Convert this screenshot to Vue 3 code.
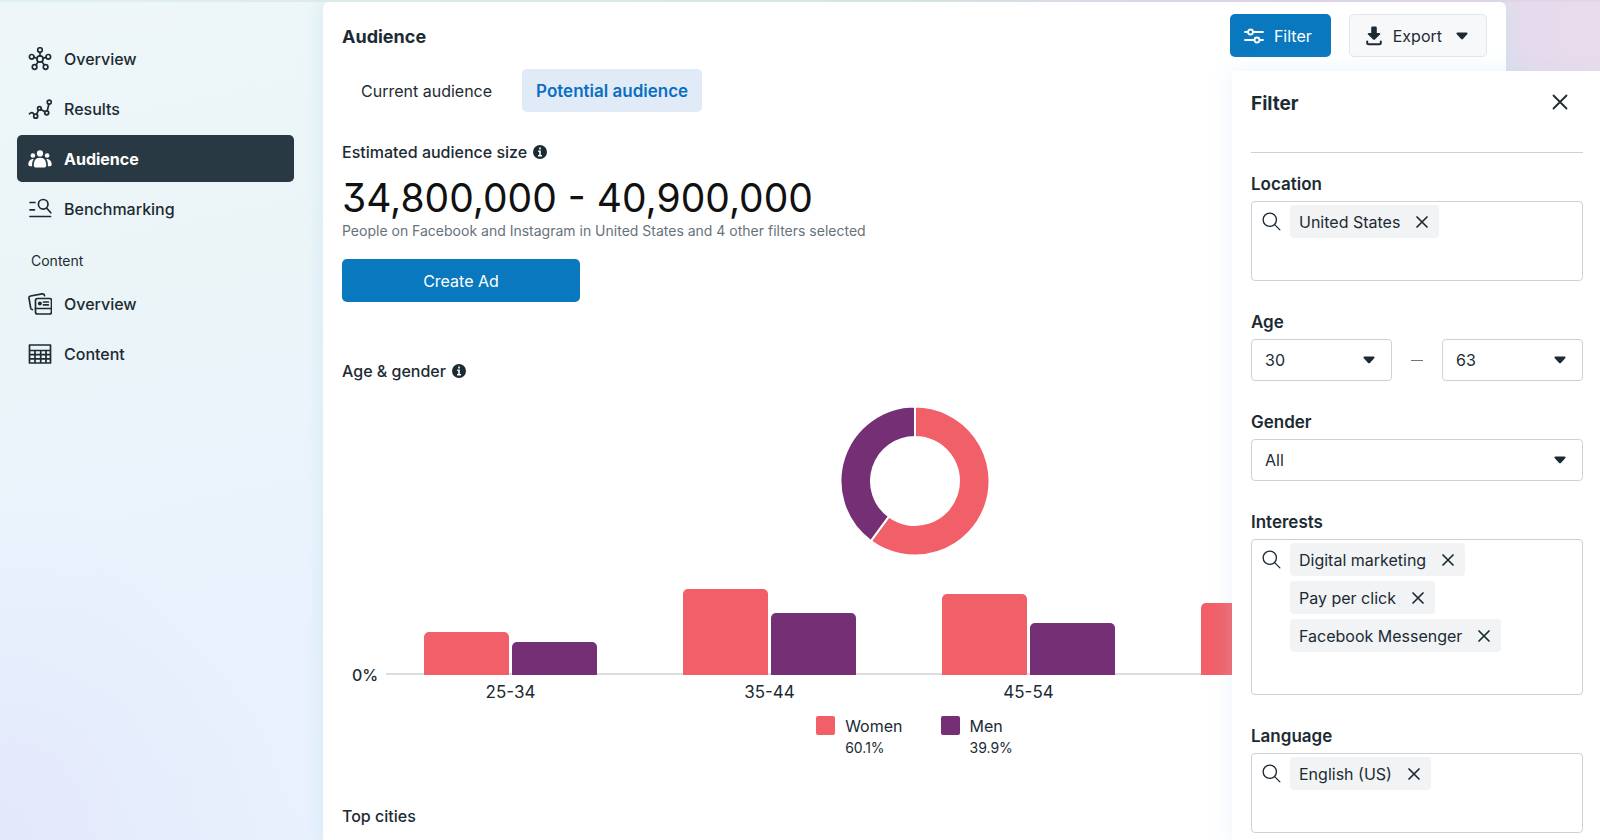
<script setup>
import { ref } from 'vue'

const mainNav = [
  { label: 'Overview', icon: 'hub' },
  { label: 'Results', icon: 'trend' },
  { label: 'Audience', icon: 'people', active: true },
  { label: 'Benchmarking', icon: 'bench' },
]
const contentNav = [
  { label: 'Overview', icon: 'cards' },
  { label: 'Content', icon: 'table' },
]

const groups = [
  { age: '25-34', women: 43, men: 33 },
  { age: '35-44', women: 86, men: 62 },
  { age: '45-54', women: 81, men: 52 },
  { age: '55-64', women: 72, men: 45 },
]

const legend = [
  { name: 'Women', share: '60.1%', key: 'women' },
  { name: 'Men', share: '39.9%', key: 'men' },
]

const locations = ref(['United States'])
const interests = ref(['Digital marketing', 'Pay per click', 'Facebook Messenger'])
const languages = ref(['English (US)'])
const minAge = ref('30')
const maxAge = ref('63')
const gender = ref('All')

function remove(list, item) {
  list.splice(list.indexOf(item), 1)
}

const tagFields = {
  location: { id: 'location', label: 'Location', tags: locations.value },
  interests: { id: 'interests', label: 'Interests', tags: interests.value },
  language: { id: 'language', label: 'Language', tags: languages.value },
}
const fieldOrder = ['location', 'age', 'gender', 'interests', 'language']

const caretPath = 'M1.5.5h9c1 0 1.4 1 .7 1.7L6.9 6.900c-.5.6-1.3.6-1.8 0L.8 2.200C.1 1.500.5.5 1.500.5z'

// Donut slices: shares are measured clockwise from the top
function slice(from, to, outer = 74.5, inner = 44) {
  const point = (share, r) => {
    const a = share * Math.PI * 2
    return `${75 + r * Math.sin(a)} ${75 - r * Math.cos(a)}`
  }
  const large = to - from > 0.5 ? 1 : 0
  return `M${point(from, outer)}A${outer} ${outer} 0 ${large} 1 ${point(to, outer)}L${point(to, inner)}A${inner} ${inner} 0 ${large} 0 ${point(from, inner)}Z`
}
</script>

<template>
  <div class="app">
    <aside class="sidebar">
      <nav aria-label="Insights">
        <template v-for="(list, n) in [mainNav, contentNav]" :key="n">
          <h2 v-if="n === 1" class="nav-heading">Content</h2>
          <ul class="nav-list">
            <li v-for="item in list" :key="item.label">
              <a href="#" class="nav-item" :class="{ active: item.active }">
                <svg class="nav-icon" viewBox="0 0 24 24" aria-hidden="true">
                  <g v-if="item.icon === 'hub'">
                    <circle cx="12" cy="12" r="3.1" />
                    <circle cx="12" cy="3" r="2.3" />
                    <circle cx="3.7" cy="9.8" r="2.3" />
                    <circle cx="20.3" cy="9.8" r="2.3" />
                    <circle cx="6.6" cy="20" r="2.3" />
                    <circle cx="17.6" cy="20" r="2.3" />
                    <path d="M12 5.4v3.5M6.1 10.4l2.9.8M17.9 10.4l-2.9.8M8 18l2.2-3.4M16.2 18 14 14.6" />
                  </g>
                  <g v-else-if="item.icon === 'trend'">
                    <circle cx="7.7" cy="19.2" r="2" />
                    <circle cx="11.4" cy="11.4" r="1.8" />
                    <circle cx="18.7" cy="15.8" r="2" />
                    <circle cx="21.3" cy="5.2" r="2" />
                    <path d="M1.5 16.8c1.6-1.8 3.6-1.6 4.6.6M8.5 17.3l2.1-4.2M13 12.4l4 2.4M19.2 13.8l1.7-6.6" />
                  </g>
                  <g v-else-if="item.icon === 'people'" class="solid">
                    <circle cx="12" cy="6.4" r="3.1" />
                    <circle cx="4.9" cy="8.5" r="2.3" />
                    <circle cx="19.1" cy="8.5" r="2.3" />
                    <path d="M5.800 18.400c0-5 1.900-7.700 6.200-7.700s6.200 2.700 6.200 7.700c0 1.400-1 2-2.200 2H8c-1.200 0-2.200-.6-2.200-2z" />
                    <path d="M5.600 12c-2.800-.4-5.300 2-5.300 5.600 0 1.200.8 1.700 1.800 1.700h2c-.2-3 .4-5.500 1.500-7.300zM18.400 12c2.800-.4 5.300 2 5.300 5.600 0 1.200-.8 1.700-1.800 1.700h-2c.2-3-.4-5.500-1.500-7.300z" />
                  </g>
                  <g v-else-if="item.icon === 'bench'">
                    <circle cx="15.2" cy="7.3" r="4.8" />
                    <path d="M18.600 11l4.200 4.800M2 5.500h5M2 12.800h4.500M2 19.500h20.500" />
                  </g>
                  <g v-else-if="item.icon === 'cards'">
                    <rect x="7.500" y="6.500" width="16" height="15.500" rx="2" />
                    <path d="M7.500 16.500h16M4.400 17.600c-1 0-1.500-.4-1.700-1.400L1 6.200c-.2-1.200.3-2 1.500-2.200l11.600-2.100c1.300-.2 2.200.4 2.400 1.700" />
                    <path d="M15.500 10h4.800M15.500 12.900h4.800" />
                    <circle class="dot" cx="11.900" cy="11.500" r="2" />
                  </g>
                  <g v-else>
                    <path d="M1.500 3h21v18h-21zM1.500 8.500h21M1.500 12.700h21M1.500 16.900h21M7 8.500V21M12.700 8.500V21M18 8.500V21" />
                  </g>
                </svg>
                {{ item.label }}
              </a>
            </li>
          </ul>
        </template>
      </nav>
    </aside>

    <main class="card">
      <header class="toolbar">
        <h1 class="title">Audience</h1>
        <button type="button" class="btn primary">
          <svg class="filter-icon" viewBox="0 0 20 16" aria-hidden="true">
            <circle cx="6.500" cy="4" r="2.500" />
            <circle cx="13" cy="12" r="2.500" />
            <path d="M1 4h3M9 4h10M1 12h9.500M15.500 12H19" />
          </svg>
          Filter
        </button>
        <button type="button" class="btn secondary">
          <svg class="export-icon" viewBox="0 0 16 20" aria-hidden="true">
            <path class="arrow" d="M5.200 1.800Q5.200.5 6.500.5h3q1.300 0 1.300 1.300V7h2.600c.9 0 1.200.8.6 1.400l-5.100 5c-.5.6-1.300.6-1.800 0L2 8.400C1.400 7.800 1.700 7 2.600 7h2.600z" />
            <path class="tray" d="M1.200 15.500v1.300q0 1.500 1.500 1.500h10.600q1.500 0 1.500-1.500v-1.300" />
          </svg>
          Export
          <svg class="caret" viewBox="0 0 12 8" aria-hidden="true"><path :d="caretPath" /></svg>
        </button>
      </header>

      <div class="tabs" role="tablist">
        <button type="button" role="tab" class="tab" aria-selected="false">Current audience</button>
        <button type="button" role="tab" class="tab selected" aria-selected="true">Potential audience</button>
      </div>

      <section class="estimate">
        <h2 class="subhead">
          Estimated audience size
          <svg class="info" viewBox="0 0 14 14" aria-hidden="true"><circle cx="7" cy="7" r="7" /><path d="M7 2.500v2M5.200 6.300H7v4.500M5 10.700h4" /></svg>
        </h2>
        <p class="figure">34,800,000 - 40,900,000</p>
        <p class="note">People on Facebook and Instagram in United States and 4 other filters selected</p>
        <button type="button" class="btn primary create">Create Ad</button>
      </section>

      <section class="demographics">
        <h2 class="subhead">
          Age &amp; gender
          <svg class="info" viewBox="0 0 14 14" aria-hidden="true"><circle cx="7" cy="7" r="7" /><path d="M7 2.500v2M5.200 6.300H7v4.500M5 10.700h4" /></svg>
        </h2>
        <svg class="donut" viewBox="0 0 150 150" role="img" aria-label="Women 60.1%, Men 39.9%">
          <path class="women" :d="slice(0, 0.601)" />
          <path class="men" :d="slice(0.601, 1)" />
        </svg>

        <div class="chart">
          <span class="axis-label">0%</span>
          <div class="plot">
            <div v-for="g in groups" :key="g.age" class="group">
              <div class="bars">
                <span class="bar women" :style="{ height: g.women + 'px' }"></span>
                <span class="bar men" :style="{ height: g.men + 'px' }"></span>
              </div>
              <span class="age">{{ g.age }}</span>
            </div>
          </div>
        </div>

        <ul class="legend">
          <li v-for="l in legend" :key="l.key">
            <span class="swatch" :class="l.key"></span>
            <span class="legend-text">{{ l.name }}<small>{{ l.share }}</small></span>
          </li>
        </ul>
      </section>

      <h2 class="subhead cities">Top cities</h2>
    </main>

    <aside class="filter-panel" aria-label="Filter">
      <header class="panel-head">
        <h2 class="title">Filter</h2>
        <button type="button" class="close" aria-label="Close">
          <svg viewBox="0 0 16 16" aria-hidden="true"><path d="M1.500 1.500l13 13M14.500 1.500l-13 13" /></svg>
        </button>
      </header>

      <form class="fields">
        <template v-for="name in fieldOrder" :key="name">
          <div v-if="name === 'age'" class="field">
            <label class="field-label" for="min-age">Age</label>
            <div class="range">
              <span class="select">
                <select id="min-age" v-model="minAge"><option>30</option></select>
                <svg class="caret" viewBox="0 0 12 8" aria-hidden="true"><path :d="caretPath" /></svg>
              </span>
              <span class="dash"></span>
              <span class="select">
                <select v-model="maxAge" aria-label="Maximum age"><option>63</option></select>
                <svg class="caret" viewBox="0 0 12 8" aria-hidden="true"><path :d="caretPath" /></svg>
              </span>
            </div>
          </div>
          <div v-else-if="name === 'gender'" class="field">
            <label class="field-label" for="gender">Gender</label>
            <span class="select">
              <select id="gender" v-model="gender"><option>All</option></select>
              <svg class="caret" viewBox="0 0 12 8" aria-hidden="true"><path :d="caretPath" /></svg>
            </span>
          </div>
          <div v-else class="field">
            <label class="field-label" :for="tagFields[name].id">{{ tagFields[name].label }}</label>
            <div class="tag-box">
              <svg class="search" viewBox="0 0 20 20" aria-hidden="true"><circle cx="8.200" cy="8.200" r="7" /><path d="M13.300 13.300l5.500 5.500" /></svg>
              <div class="tags">
                <span v-for="tag in tagFields[name].tags" :key="tag" class="tag">
                  {{ tag }}
                  <button type="button" :aria-label="'Remove ' + tag" @click="remove(tagFields[name].tags, tag)">
                    <svg viewBox="0 0 12 12" aria-hidden="true"><path d="M1 1l10 10M11 1L1 11" /></svg>
                  </button>
                </span>
                <input :id="tagFields[name].id" type="text" autocomplete="off" />
              </div>
            </div>
          </div>
        </template>
      </form>
    </aside>
  </div>
</template>

<style>
body {
  margin: 0;
}
</style>

<style scoped>
.app {
  --ink: #1c2b33;
  --blue: #0a78be;
  --women: #f15f68;
  --men: #742f75;
  --line: #cbd2d9;
  position: relative;
  box-sizing: border-box;
  min-height: 100vh;
  padding: 2px 94px 0 0;
  display: grid;
  grid-template-columns: 323px minmax(0, 1fr);
  overflow: hidden;
  font: 400 16px/24px Inter, "Liberation Sans", sans-serif;
  color: var(--ink);
  background:
    linear-gradient(90deg, transparent 90%, #e4dbec 95%, #eadcec 100%),
    radial-gradient(ellipse 300px 340px at 0 100%, #e3e8fb, transparent),
    linear-gradient(168deg, #eef6f8 0, #ebf5f7 24%, #eaf3fc 46%, #e6effd 100%);
}
.app::before {
  content: "";
  position: absolute;
  inset: 0 0 auto;
  height: 2px;
  background: linear-gradient(90deg, #e0eff0, #d5e6e2 50%, #d9d3e6 80%, #e2d6e8);
}
h1, h2, p, ul {
  margin: 0;
  padding: 0;
}
ul {
  list-style: none;
}
button, select, input {
  font: inherit;
  color: inherit;
}
button {
  cursor: pointer;
}
svg {
  flex: none;
}

/* Sidebar */
.sidebar {
  padding: 33px 29px 0 17px;
}
.nav-list {
  display: grid;
  gap: 3px;
}
.nav-item {
  display: flex;
  align-items: center;
  gap: 12px;
  height: 47px;
  padding: 0 11px;
  border-radius: 5px;
  color: var(--ink);
  font-weight: 500;
  text-decoration: none;
}
.nav-item.active {
  background: #283943;
  color: #fff;
  font-weight: 700;
}
.nav-icon {
  width: 24px;
  height: 24px;
  fill: none;
  stroke: currentColor;
  stroke-width: 1.7;
  stroke-linecap: round;
  stroke-linejoin: round;
}
.nav-icon .solid, .nav-icon .dot {
  fill: currentColor;
  stroke: none;
}
.nav-heading {
  margin: 17px 0 7px 14px;
  font-size: 14px;
  font-weight: 400;
}

/* Main card */
.card {
  padding: 12px 19px 11px;
  border-radius: 6px 6px 0 0;
  background: #fff;
  box-shadow: 0 0 18px rgba(170, 220, 235, 0.4);
}
.toolbar {
  display: flex;
  align-items: center;
  gap: 18px;
}
.title {
  flex: 1;
  padding-top: 2px;
  font-size: 18px;
  font-weight: 700;
}
.panel-head .title {
  font-size: 19px;
}
.btn {
  display: inline-flex;
  align-items: center;
  justify-content: center;
  box-sizing: border-box;
  height: 43px;
  border: 0;
  border-radius: 5px;
}
.primary {
  gap: 10px;
  padding: 0 19px 0 14px;
  background: var(--blue);
  color: #fff;
}
.secondary {
  gap: 11px;
  padding: 0 18px 0 16px;
  border: 1px solid #e3e6ea;
  background: #f7f8fa;
}
.filter-icon {
  width: 20px;
  height: 16px;
  fill: none;
  stroke: currentColor;
  stroke-width: 1.8;
  stroke-linecap: round;
}
.export-icon {
  width: 16px;
  height: 20px;
}
.arrow, .caret {
  fill: var(--ink);
}
.tray {
  fill: none;
  stroke: var(--ink);
  stroke-width: 2;
  stroke-linecap: round;
}
.caret {
  width: 12px;
  height: 8px;
}
.secondary .caret {
  margin-left: 3px;
}
.tabs {
  display: flex;
  gap: 16px;
  margin: 12px 0 28px 5px;
}
.tab {
  height: 43px;
  padding: 0 14px;
  border: 0;
  border-radius: 5px;
  background: none;
}
.tab.selected {
  background: #e1ebf7;
  color: #0a6fc2;
  font-size: 17px;
  font-weight: 600;
}
.subhead {
  display: flex;
  align-items: center;
  gap: 6px;
  font-size: 16px;
  font-weight: 500;
}
.info {
  width: 14px;
  height: 14px;
  fill: var(--ink);
}
.info path {
  fill: none;
  stroke: #fff;
  stroke-width: 1.6;
}
.figure {
  margin-top: 11px;
  font-size: 39px;
  line-height: 46px;
  font-feature-settings: "cv09";
  color: #111;
}
.note {
  font-size: 14px;
  line-height: 20px;
  color: #67727a;
}
.create {
  width: 238px;
  margin-top: 18px;
  padding: 0;
}
.demographics {
  margin-top: 57px;
}
.donut {
  display: block;
  width: 150px;
  height: 150px;
  margin: 23px auto 0;
  stroke: #fff;
  stroke-width: 2;
}
.women {
  fill: var(--women);
  background: var(--women);
}
.men {
  fill: var(--men);
  background: var(--men);
}
.chart {
  display: flex;
  align-items: flex-end;
  gap: 10px;
  margin-top: 18px;
  padding-left: 10px;
}
.axis-label {
  width: 24px;
  margin-bottom: 17px;
  font-weight: 500;
}
.plot {
  flex: 1;
  display: flex;
  justify-content: space-between;
  padding: 0 113px 0 38px;
  background: linear-gradient(#dcdddf, #dcdddf) 0 99px / 100% 2px no-repeat;
}
.group {
  width: 173px;
  text-align: center;
}
.bars {
  display: flex;
  align-items: flex-end;
  gap: 3px;
  height: 101px;
}
.bar {
  flex: 1;
  border-radius: 5px 5px 0 0;
}
.age {
  display: block;
  margin-top: 5px;
  font-size: 17px;
}
.legend {
  display: flex;
  justify-content: center;
  gap: 38px;
  margin-top: 10px;
}
.legend li {
  display: flex;
  gap: 10px;
}
.swatch {
  width: 19px;
  height: 19px;
  margin-top: 2px;
  border-radius: 2px;
}
.legend-text small {
  display: block;
  font-size: 14px;
  line-height: 20px;
}
.cities {
  margin-top: 46px;
}

/* Filter panel */
.filter-panel {
  position: absolute;
  top: 71px;
  right: 0;
  bottom: 0;
  box-sizing: border-box;
  width: 368px;
  padding: 0 17px 8px 19px;
  background: #fff;
  box-shadow: 0 0 22px rgba(190, 215, 240, 0.3);
}
.panel-head {
  display: flex;
  align-items: flex-start;
  box-sizing: border-box;
  height: 82px;
  padding: 19px 15px 0 0;
  border-bottom: 1px solid var(--line);
}
.close {
  display: flex;
  padding: 4px 0;
  border: 0;
  background: none;
}
.close svg {
  width: 16px;
  height: 16px;
  stroke: var(--ink);
  stroke-width: 1.8;
  stroke-linecap: round;
}
.fields {
  display: grid;
  gap: 29px;
  margin-top: 19px;
}
.field-label {
  display: block;
  margin-bottom: 5px;
  font-size: 17px;
  font-weight: 600;
}
.tag-box {
  display: flex;
  gap: 9px;
  padding: 3px 10px 4px;
  border: 1px solid var(--line);
  border-radius: 4px;
}
.search {
  width: 19px;
  height: 19px;
  margin-top: 7px;
  fill: none;
  stroke: var(--ink);
  stroke-width: 1.4;
  stroke-linecap: round;
}
.tags {
  flex: 1;
  display: flex;
  flex-direction: column;
  align-items: flex-start;
  gap: 5px;
  min-width: 0;
}
.tag {
  display: flex;
  align-items: center;
  gap: 16px;
  height: 33px;
  padding: 0 11px 0 9px;
  border-radius: 4px;
  background: #f1f3f5;
}
.tag button {
  display: flex;
  padding: 0;
  border: 0;
  background: none;
}
.tag svg {
  width: 12px;
  height: 12px;
  stroke: var(--ink);
  stroke-width: 1.7;
  stroke-linecap: round;
}
.tags input {
  box-sizing: border-box;
  width: 100%;
  height: 33px;
  padding: 0 9px;
  border: 0;
  outline: 0;
  background: none;
}
.range {
  display: flex;
  align-items: center;
  justify-content: space-between;
}
.range .select {
  width: 141px;
}
.dash {
  width: 12px;
  height: 1px;
  background: #6b767e;
}
.select {
  position: relative;
  display: block;
}
.select select {
  appearance: none;
  display: block;
  box-sizing: border-box;
  width: 100%;
  height: 42px;
  padding: 0 36px 0 13px;
  border: 1px solid var(--line);
  border-radius: 4px;
  background: #fff;
}
.select .caret {
  position: absolute;
  top: 17px;
  right: 17px;
  pointer-events: none;
}
</style>
